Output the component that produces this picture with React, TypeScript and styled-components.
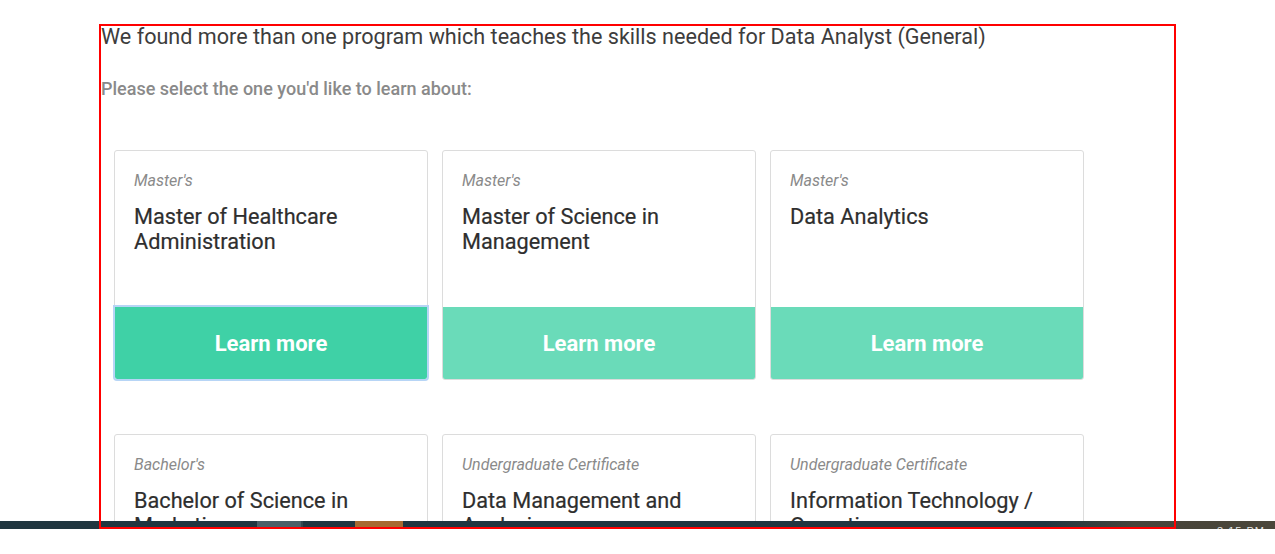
import React from 'react';
import styled, { createGlobalStyle } from 'styled-components';

const GlobalStyle = createGlobalStyle`
  html, body {
    margin: 0;
    padding: 0;
    background: #fff;
  }
  body {
    font-family: Roboto, "Liberation Sans", Arial, sans-serif;
  }
`;

const Screen = styled.div`
  position: relative;
  width: 1275px;
  height: 554px;
  overflow: hidden;
  background: #fff;
`;

const Viewport = styled.div`
  height: 521px;
  overflow: hidden;
`;

const Main = styled.main`
  padding: 24px 0 0 101px;
`;

const Heading = styled.h1`
  margin: 0;
  font-size: 21.6px;
  line-height: 26px;
  font-weight: 400;
  color: #3d3d3d;
`;

const SubHeading = styled.h2`
  margin: 29px 0 0;
  font-size: 18px;
  line-height: 20px;
  font-weight: 500;
  color: #8a8a8a;
`;

const CardGrid = styled.div`
  display: grid;
  grid-template-columns: repeat(3, 314px);
  column-gap: 14px;
  row-gap: 54px;
  margin-top: 51px;
  padding-left: 13px;
`;

const Card = styled.div`
  display: flex;
  flex-direction: column;
  border: 1px solid #dcdcdc;
  border-radius: 3px;
  background: #fff;
`;

const CardBody = styled.div`
  height: 156px;
  box-sizing: border-box;
  padding: 20px 19px 0;
`;

const Level = styled.div`
  font-size: 16px;
  line-height: 20px;
  font-style: italic;
  color: #8a8a8a;
`;

const Title = styled.div`
  margin-top: 12.5px;
  font-size: 21.7px;
  line-height: 25px;
  font-weight: 400;
  color: #2e2e2e;
  -webkit-text-stroke: 0.2px #2e2e2e;
`;

const LearnButton = styled.button<{ $active?: boolean }>`
  position: relative;
  display: flex;
  align-items: center;
  justify-content: center;
  height: 72px;
  margin: 0;
  padding: 0;
  border: none;
  border-radius: 0 0 2px 2px;
  background: ${p => (p.$active ? '#3fd1a6' : '#6adbb9')};
  color: #fff;
  font-family: Roboto, "Liberation Sans", Arial, sans-serif;
  font-size: 22px;
  font-weight: 700;
  cursor: pointer;
  outline: ${p => (p.$active ? '2px solid #b7d5f6' : 'none')};
  outline-offset: 0;
`;

const Taskbar = styled.div`
  display: flex;
  height: 8px;
  background: linear-gradient(90deg, #203640 0%, #203640 82%, #47443a 89%, #4a463a 100%);
  overflow: hidden;
`;

const TaskSlot = styled.div<{ $w: number; $color?: string }>`
  flex: 0 0 ${p => p.$w}px;
  background: ${p => p.$color || 'transparent'};
`;

const Clock = styled.div`
  margin-left: auto;
  margin-right: 10px;
  padding-top: 4px;
  font-family: "Liberation Sans", Arial, sans-serif;
  font-size: 11px;
  line-height: 12px;
  color: #e6e6e6;
  letter-spacing: 1px;
`;

const Annotation = styled.div`
  position: absolute;
  left: 99px;
  top: 24px;
  width: 1077px;
  height: 505px;
  box-sizing: border-box;
  border: 2px solid #ff0000;
  pointer-events: none;
`;

type Program = { level: string; title: string };

const programs: Program[] = [
  { level: "Master's", title: 'Master of Healthcare Administration' },
  { level: "Master's", title: 'Master of Science in Management' },
  { level: "Master's", title: 'Data Analytics' },
  { level: "Bachelor's", title: 'Bachelor of Science in Marketing' },
  { level: 'Undergraduate Certificate', title: 'Data Management and Analysis' },
  { level: 'Undergraduate Certificate', title: 'Information Technology / Operations' },
];

export default function App() {
  return (
    <Screen>
      <GlobalStyle />
      <Viewport>
        <Main>
          <Heading>
            We found more than one program which teaches the skills needed for Data Analyst (General)
          </Heading>
          <SubHeading>Please select the one you'd like to learn about:</SubHeading>
          <CardGrid>
            {programs.map((p, i) => (
              <Card key={i}>
                <CardBody>
                  <Level>{p.level}</Level>
                  <Title>{p.title}</Title>
                </CardBody>
                <LearnButton $active={i === 0}>Learn more</LearnButton>
              </Card>
            ))}
          </CardGrid>
        </Main>
      </Viewport>
      <Taskbar>
        <TaskSlot $w={257} />
        <TaskSlot $w={44} $color="#4b6068" />
        <TaskSlot $w={2} $color="#34474f" />
        <TaskSlot $w={52} />
        <TaskSlot $w={48} $color="#a66a31" />
        <Clock>3:15 PM</Clock>
      </Taskbar>
      <Annotation />
    </Screen>
  );
}
